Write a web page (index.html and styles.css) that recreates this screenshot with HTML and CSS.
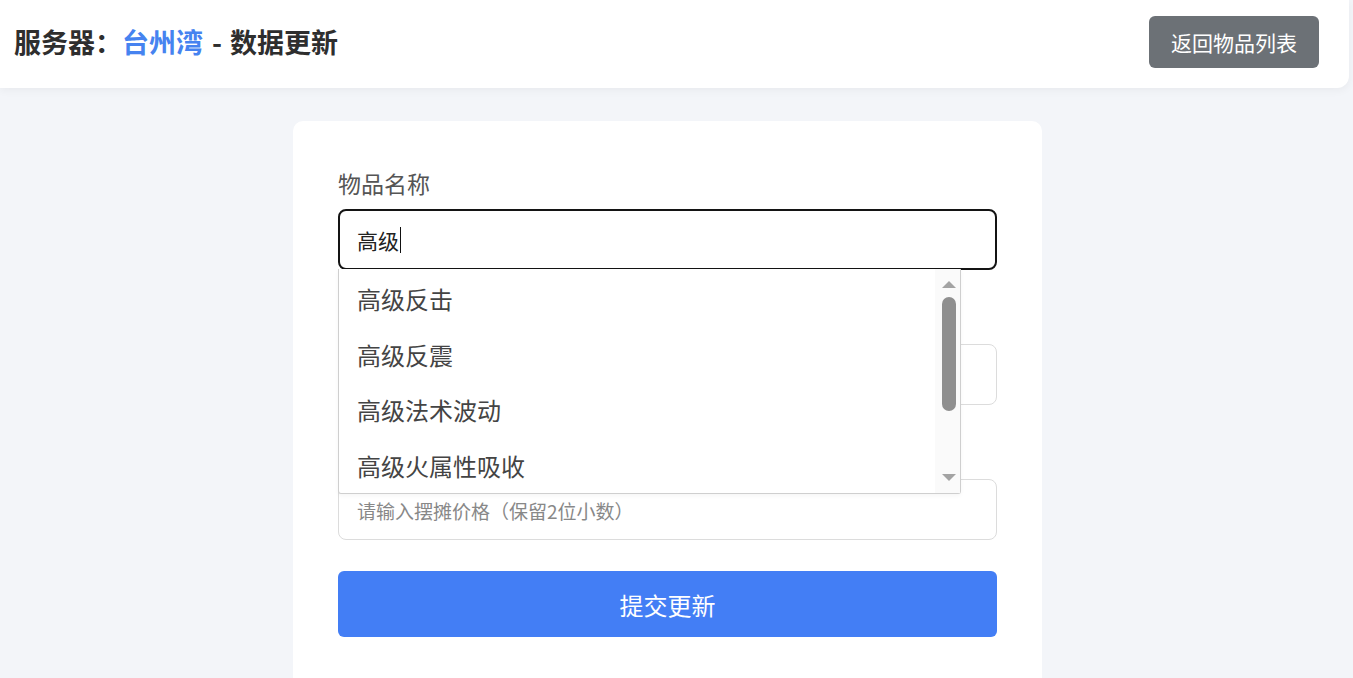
FILE: index.html
```html
<!DOCTYPE html>
<html lang="zh-CN">
<head>
<meta charset="utf-8">
<title>数据更新</title>
<link rel="stylesheet" href="styles.css">
</head>
<body>
<header class="topbar">
  <h1 class="title">服务器：<span class="server">台州湾</span><span class="sep">-</span>数据更新</h1>
  <button class="btn-back" type="button">返回物品列表</button>
</header>
<main class="page">
  <section class="card">
    <form class="form">
      <div class="field">
        <label class="label">物品名称</label>
        <div class="combo">
          <div class="fake-input is-focused">高级<span class="caret"></span></div>
          <div class="dropdown">
            <ul class="options">
              <li class="option">高级反击</li>
              <li class="option">高级反震</li>
              <li class="option">高级法术波动</li>
              <li class="option">高级火属性吸收</li>
            </ul>
            <div class="scrollbar">
              <span class="arrow-up"></span>
              <span class="thumb"></span>
              <span class="spacer"></span>
              <span class="arrow-down"></span>
            </div>
          </div>
        </div>
      </div>
      <div class="field">
        <label class="label">摆摊数量</label>
        <input class="input" type="text" placeholder="请输入摆摊数量">
      </div>
      <div class="field">
        <label class="label">摆摊价格</label>
        <input class="input" type="text" placeholder="请输入摆摊价格（保留2位小数）">
      </div>
      <button class="btn-submit" type="button">提交更新</button>
    </form>
  </section>
</main>
</body>
</html>
```
FILE: styles.css
```css
* { box-sizing: border-box; }
html, body { margin: 0; padding: 0; }
body {
  background: #f3f5f9;
  font-family: "Noto Sans CJK SC", "Noto Sans", sans-serif;
  color: #333;
  height: 678px;
  overflow: hidden;
}
.topbar {
  height: 88px;
  margin-right: 4px;
  background: #fff;
  border-radius: 0 0 12px 0;
  box-shadow: 0 2px 10px rgba(0, 0, 0, 0.05);
  display: flex;
  align-items: center;
  justify-content: space-between;
  padding: 0 30px 4px 14px;
}
.title {
  margin: 0;
  font-size: 27px;
  font-weight: 700;
  color: #2e2e2e;
  line-height: 1.3;
}
.server { color: #4683f0; }
.sep { margin: 0 8px 0 9px; }
.btn-back {
  width: 170px;
  height: 52px;
  border: none;
  border-radius: 6px;
  background: #6c7176;
  color: #fff;
  font-family: inherit;
  font-size: 21px;
  padding: 0;
}
.page {
  padding: 33px 18px 0 0;
}
.card {
  width: 749px;
  margin: 0 auto;
  background: #fff;
  border-radius: 10px;
  padding: 45px 45px 40px;
  min-height: 600px;
}
.form {
  display: flex;
  flex-direction: column;
  gap: 31px;
}
.field {
  display: flex;
  flex-direction: column;
  gap: 9px;
}
.label {
  font-size: 23px;
  line-height: 34px;
  color: #555;
}
.combo { position: relative; }
.fake-input, .input {
  height: 61px;
  width: 100%;
  border: 1px solid #dcdcdc;
  border-radius: 8px;
  padding: 0 18px;
  font-family: inherit;
  font-size: 21px;
  color: #222;
  background: #fff;
}
.fake-input {
  display: flex;
  align-items: center;
}
.fake-input.is-focused {
  border: 2px solid #141414;
  padding: 0 17px;
}
.caret {
  display: inline-block;
  width: 1px;
  height: 26px;
  background: #111;
  margin-left: 1px;
}
.input::placeholder {
  color: #888;
  font-size: 19px;
}
.dropdown {
  position: absolute;
  top: calc(100% - 1px);
  left: 0;
  width: 623px;
  height: 225px;
  background: #fff;
  border: 1px solid #cfcfcf;
  border-top: none;
  border-radius: 0 0 3px 3px;
  display: flex;
  box-shadow: 0 2px 4px rgba(0, 0, 0, 0.04);
}
.options {
  list-style: none;
  margin: 0;
  padding: 2px 0 0;
  flex: 1;
}
.option {
  height: 55.5px;
  line-height: 55.5px;
  padding-left: 18px;
  font-size: 24px;
  color: #444;
}
.scrollbar {
  width: 25px;
  background: #fafafa;
  display: flex;
  flex-direction: column;
  align-items: flex-start;
  padding: 12px 0 12px 7px;
}
.arrow-up, .arrow-down {
  width: 0;
  height: 0;
  border-left: 7px solid transparent;
  border-right: 7px solid transparent;
}
.arrow-up { border-bottom: 7px solid #a3a3a3; }
.arrow-down { border-top: 7px solid #a3a3a3; }
.thumb {
  margin-top: 9px;
  width: 14px;
  height: 114px;
  border-radius: 7px;
  background: #8f8f8f;
}
.spacer { flex: 1; }
.btn-submit {
  height: 66px;
  width: 100%;
  border: none;
  border-radius: 6px;
  background: #437ef5;
  color: #fff;
  font-family: inherit;
  font-size: 24px;
}
```
